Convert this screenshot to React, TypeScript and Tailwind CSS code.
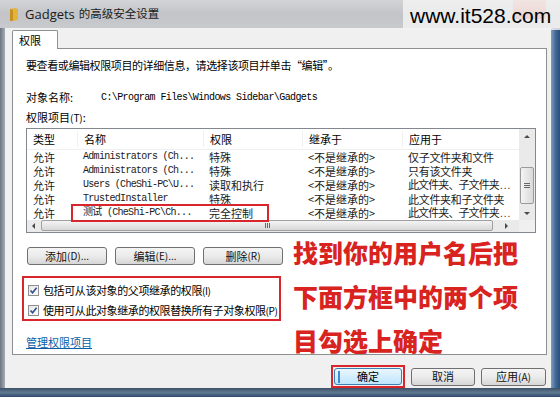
import React from "react";

const rows = [
  { t: "允许", n: "Administrators (Ch...", p: "特殊", i: "<不是继承的>", a: "仅子文件夹和文件", e: false },
  { t: "允许", n: "Administrators (Ch...", p: "特殊", i: "<不是继承的>", a: "只有该文件夹", e: false },
  { t: "允许", n: "Users (CheShi-PC\\U...", p: "读取和执行", i: "<不是继承的>", a: "此文件夹、子文件夹", e: true },
  { t: "允许", n: "TrustedInstaller", p: "特殊", i: "<不是继承的>", a: "此文件夹和子文件夹", e: false },
  { t: "允许", n: "测试 (CheShi-PC\\Ch...", p: "完全控制", i: "<不是继承的>", a: "此文件夹、子文件夹", e: true },
];

function Btn({ children, w }: { children: React.ReactNode; w: string }) {
  return (
    <div
      className={`${w} h-[18px] flex items-center justify-center rounded-[3px] border border-[#707070] bg-gradient-to-b from-[#f4f4f4] via-[#ebebeb] to-[#d6d6d6] text-[11px] leading-none text-[#111]`}
    >
      {children}
    </div>
  );
}

function Check() {
  return (
    <div className="w-[11px] h-[11px] border border-[#8e8f8f] bg-gradient-to-br from-[#e6e6e6] to-[#ffffff] flex items-center justify-center shrink-0">
      <svg width="9" height="9" viewBox="0 0 9 9">
        <path d="M1.5 4.5 L3.6 6.8 L7.6 1.8" stroke="#2f4f8f" strokeWidth="1.6" fill="none" />
      </svg>
    </div>
  );
}

function Arrow({ dir }: { dir: "up" | "down" | "left" | "right" }) {
  const d =
    dir === "up"
      ? "M1 5 L4 2 L7 5 Z"
      : dir === "down"
      ? "M1 3 L4 6 L7 3 Z"
      : dir === "left"
      ? "M5 1 L2 4 L5 7 Z"
      : "M3 1 L6 4 L3 7 Z";
  return (
    <svg width="8" height="8" viewBox="0 0 8 8">
      <path d={d} fill="#4a4a4a" />
    </svg>
  );
}

export default function App() {
  return (
    <div className="w-[560px] h-[397px] overflow-hidden relative flex flex-col bg-[#4d6a8c] font-['Noto_Sans_CJK_SC','Noto_Sans',sans-serif] text-[11px] text-black">
      {/* title bar */}
      <div className="h-[28px] shrink-0 flex items-center pl-[10px] bg-gradient-to-b from-[#d3d4d6] via-[#c2c4c7] to-[#c8cacd]">
        <svg width="8" height="13" viewBox="0 0 8 13" className="mr-[7px]">
          <path d="M0 1 L5 0 L8 1 L8 12 L0 13 Z" fill="#e2b43c" />
          <path d="M0 1 L3 2 L3 13 L0 13 Z" fill="#c7901f" />
        </svg>
        <span className="font-['Open_Sans','Noto_Sans',sans-serif] text-[13px] text-[#1a1a1a] leading-none">Gadgets</span>
        <span className="ml-[4px] text-[11.5px] text-[#1a1a1a] leading-none">的高级安全设置</span>
      </div>

      <div className="flex-1 flex min-h-0">
        <div className="w-[5px] shrink-0 bg-gradient-to-r from-[#6c7480] to-[#a4adb8]" />
        {/* client area */}
        <div className="flex-1 bg-[#f0f0f0] flex flex-col pt-[2px] pl-[7px] pr-[4px]">
          {/* tab */}
          <div className="w-[46px] h-[19px] bg-white border border-b-0 border-[#8e8f8f] rounded-t-[2px] flex items-center pl-[6px] text-[11px] relative z-10 -mb-px">
            权限
          </div>
          {/* panel */}
          <div className="h-[307px] bg-white border border-[#8e8f8f] pl-[13px] pr-[10px] flex flex-col">
            <div className="mt-[8px] h-[16px] leading-[16px] tracking-[-0.4px] whitespace-nowrap">
              要查看或编辑权限项目的详细信息，请选择该项目并单击“编辑”。
            </div>
            <div className="mt-[16px] h-[16px] flex items-center">
              <span className="w-[75px]">对象名称:</span>
              <span className="font-['Liberation_Mono',monospace] text-[10px] tracking-[-0.6px]">
                C:\Program Files\Windows Sidebar\Gadgets
              </span>
            </div>
            <div className="mt-[4px] h-[16px] leading-[16px]">
              权限项目<span className="text-[10px]">(T)</span>:
            </div>
            {/* list box */}
            <div className="mt-[3px] w-[510px] h-[105px] border border-[#828790] flex flex-col relative">
              <div className="flex flex-1 min-h-0">
                <div className="flex-1 flex flex-col">
                  {/* header */}
                  <div className="h-[21px] flex items-center border-b border-[#eef0f2]">
                    <div className="w-[50px] pl-[6px]">类型</div>
                    <div className="w-[126px] pl-[6px] border-l border-[#f0f0f0]">名称</div>
                    <div className="w-[99px] pl-[6px] border-l border-[#f0f0f0]">权限</div>
                    <div className="w-[100px] pl-[6px] border-l border-[#f0f0f0]">继承于</div>
                    <div className="flex-1 pl-[6px] border-l border-[#f0f0f0]">应用于</div>
                  </div>
                  {rows.map((r, k) => (
                    <div key={k} className="h-[14px] flex items-center leading-[14px] text-[#1a1a1a] whitespace-nowrap">
                      <div className="w-[50px] pl-[6px]">{r.t}</div>
                      <div className="w-[126px] pl-[6px] font-['Liberation_Mono','Noto_Sans_CJK_SC',monospace] text-[10px] tracking-[-0.7px]">
                        {r.n}
                      </div>
                      <div className="w-[99px] pl-[6px]">{r.p}</div>
                      <div className="w-[100px] pl-[6px]">{r.i}</div>
                      <div className="flex-1 pl-[6px] flex items-baseline">
                        <span className={r.e ? "tracking-[-0.9px]" : "tracking-[-0.3px]"}>{r.a}</span>
                        {r.e && (
                          <span className="font-['Liberation_Sans',sans-serif] text-[10px] tracking-[1px] ml-[1px]">...</span>
                        )}
                      </div>
                    </div>
                  ))}
                </div>
                {/* vertical scrollbar */}
                <div className="w-[16px] bg-[#eaeaea] flex flex-col items-center">
                  <div className="h-[16px] w-full flex items-center justify-center">
                    <Arrow dir="up" />
                  </div>
                  <div className="mt-[22px] w-[14px] h-[37px] rounded-[2px] border border-[#9a9a9a] bg-gradient-to-r from-[#f4f4f4] to-[#d9d9d9] flex items-center justify-center">
                    <div className="flex flex-col gap-[1px]">
                      <div className="w-[6px] h-px bg-[#666]" />
                      <div className="w-[6px] h-px bg-[#666]" />
                      <div className="w-[6px] h-px bg-[#666]" />
                    </div>
                  </div>
                  <div className="flex-1" />
                  <div className="h-[14px] w-full flex items-center justify-center">
                    <Arrow dir="down" />
                  </div>
                </div>
              </div>
              {/* horizontal scrollbar */}
              <div className="h-[12px] flex bg-[#eaeaea]">
                <div className="w-[14px] flex items-center justify-center">
                  <Arrow dir="left" />
                </div>
                <div className="w-[452px] h-[11px] rounded-[2px] border border-[#a0a0a0] bg-gradient-to-b from-[#f4f4f4] to-[#d8d8d8] flex items-center justify-center">
                  <div className="flex gap-[1px]">
                    <div className="w-px h-[5px] bg-[#666]" />
                    <div className="w-px h-[5px] bg-[#666]" />
                    <div className="w-px h-[5px] bg-[#666]" />
                  </div>
                </div>
                <div className="flex-1 flex items-center justify-center">
                  <Arrow dir="right" />
                </div>
                <div className="w-[16px] bg-[#f0f0f0]" />
              </div>
              {/* red highlight around the 测试 row */}
              <div className="absolute left-[44px] top-[75px] w-[198px] h-[18px] border-2 border-[#d9262c]" />
            </div>
            {/* buttons */}
            <div className="mt-[14px] flex gap-[8px] pl-px">
              <Btn w="w-[80px]">
                添加<span className="text-[10px]">(D)...</span>
              </Btn>
              <Btn w="w-[80px]">
                编辑<span className="text-[10px]">(E)...</span>
              </Btn>
              <Btn w="w-[80px]">
                删除<span className="text-[10px]">(R)</span>
              </Btn>
            </div>
            {/* checkbox box */}
            <div className="mt-[11px] -ml-[4px] w-[259px] h-[45px] border-2 border-[#d9262c] pt-[4px] pl-[4px] flex flex-col gap-[4px] tracking-[-0.4px]">
              <div className="h-[16px] flex items-center gap-[4px]">
                <Check />
                <span>
                  包括可从该对象的父项继承的权限<span className="text-[10px]">(I)</span>
                </span>
              </div>
              <div className="h-[16px] flex items-center gap-[4px]">
                <Check />
                <span className="whitespace-nowrap">
                  使用可从此对象继承的权限替换所有子对象权限<span className="text-[10px]">(P)</span>
                </span>
              </div>
            </div>
            <div className="mt-[13px] h-[16px] leading-[16px] text-[#0a5fa8] underline">管理权限项目</div>
          </div>
          {/* bottom buttons */}
          <div className="mt-[10px] flex items-center justify-end gap-[6px] pr-[1px]">
            <div className="border-2 border-[#d9262c] p-px">
              <div className="w-[68px] h-[17px] flex items-center justify-center rounded-[3px] border border-[#3c7fb1] bg-gradient-to-b from-[#eaf6fd] to-[#bee6fd] text-[11px] leading-none relative">
                <div className="absolute left-[3px] top-[2px] w-[2px] h-[12px] bg-[#3b8fd0]" />
                确定
              </div>
            </div>
            <Btn w="w-[64px]">取消</Btn>
            <Btn w="w-[65px]">
              应用<span className="text-[10px]">(A)</span>
            </Btn>
          </div>
        </div>
        <div className="w-[10px] shrink-0 bg-gradient-to-r from-[#7f9dc0] via-[#3e6591] to-[#264a78]" />
      </div>
      <div className="h-[9px] shrink-0 bg-gradient-to-b from-[#3e5166] via-[#5f7891] to-[#2f4a6b]" />

      {/* close button behind watermark */}
      <div className="absolute left-[513px] top-0 w-[33px] h-[19px] rounded-b-[4px] bg-gradient-to-b from-[#e7a79d] to-[#c9584a]" />
      {/* watermark */}
      <div className="absolute right-0 top-0 w-[157px] h-[30px] bg-[#f4f4f4]/80 flex items-center pl-[7px] font-['Liberation_Sans',sans-serif] text-[21px] text-black leading-none">
        www.it528.com
      </div>

      {/* red annotation */}
      <div className="absolute left-[293px] top-[230px] text-[25px] leading-[44px] font-black text-[#d8231f] whitespace-nowrap">
        <div>找到你的用户名后把</div>
        <div>下面方框中的两个项</div>
        <div>目勾选上确定</div>
      </div>
    </div>
  );
}
